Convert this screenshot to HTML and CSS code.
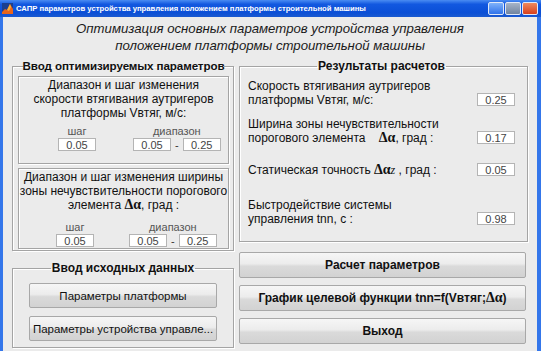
FILE: index.html
```html
<!DOCTYPE html>
<html lang="ru">
<head>
  <meta charset="UTF-8">
  <title>САПР параметров устройства управления</title>
  <link rel="stylesheet" href="styles.css">
</head>
<body>

  <div class="window">
    <div class="titlebar">
      <svg class="app-icon" width="11" height="11" viewBox="0 0 11 11">
        <rect width="11" height="11" fill="#1b3f8f"/>
        <polygon points="0,9 3,6 5,7 8,1 11,6 11,11 0,11" fill="#e8641a"/>
        <polygon points="5,7 8,1 9,4 7,8" fill="#f6b13a"/>
      </svg>
      <span class="title">САПР параметров устройства управления положением платформы строительной машины</span>
      <div class="controls">
        <span class="ctl ctl-min"></span>
        <span class="ctl ctl-max"></span>
        <span class="ctl ctl-close"></span>
      </div>
    </div>

    <div class="client">
      <h1 class="heading">Оптимизация основных параметров устройства управления<br>положением платформы строительной машины</h1>

      <div class="columns">
        <div class="col-left">
          <fieldset class="panel panel-opt">
            <legend>Ввод оптимизируемых параметров</legend>

            <div class="subpanel sub-speed">
              <p class="sub-text">Диапазон и шаг изменения<br>скорости втягивания аутригеров<br>платформы Vвтяг, м/с:</p>
              <div class="ranges">
                <div class="step">
                  <span class="cap">шаг</span>
                  <input class="num" type="text" value="0.05">
                </div>
                <div class="range">
                  <span class="cap">диапазон</span>
                  <div class="pair">
                    <input class="num" type="text" value="0.05">
                    <span class="dash">-</span>
                    <input class="num" type="text" value="0.25">
                  </div>
                </div>
              </div>
            </div>

            <div class="subpanel sub-zone">
              <p class="sub-text">Диапазон и шаг изменения ширины<br>зоны нечувствительности порогового<br>элемента <span class="greek">Δα</span>, град :</p>
              <div class="ranges">
                <div class="step">
                  <span class="cap">шаг</span>
                  <input class="num" type="text" value="0.05">
                </div>
                <div class="range">
                  <span class="cap">диапазон</span>
                  <div class="pair">
                    <input class="num" type="text" value="0.05">
                    <span class="dash">-</span>
                    <input class="num" type="text" value="0.25">
                  </div>
                </div>
              </div>
            </div>
          </fieldset>

          <fieldset class="panel panel-src">
            <legend>Ввод исходных данных</legend>
            <button class="btn">Параметры платформы</button>
            <button class="btn">Параметры устройства управле...</button>
          </fieldset>
        </div>

        <div class="col-right">
          <fieldset class="panel panel-res">
            <legend>Результаты расчетов</legend>

            <div class="res-row row-speed">
              <p class="res-text">Скорость втягивания аутригеров<br>платформы Vвтяг, м/с:</p>
              <input class="num" type="text" value="0.25">
            </div>

            <div class="res-row row-zone">
              <p class="res-text">Ширина зоны нечувствительности<br>порогового элемента <span class="greek greek-gap">Δα</span>, град :</p>
              <input class="num" type="text" value="0.17">
            </div>

            <div class="res-row row-static">
              <p class="res-text">Статическая точность <span class="greek">Δα<i>z</i></span> , град :</p>
              <input class="num" type="text" value="0.05">
            </div>

            <div class="res-row row-speedup">
              <p class="res-text">Быстродействие системы<br>управления tnn, с :</p>
              <input class="num" type="text" value="0.98">
            </div>
          </fieldset>

          <button class="btn btn-wide">Расчет параметров</button>
          <button class="btn btn-wide">График целевой функции tnn=f(Vвтяг;<span class="greek">Δα</span>)</button>
          <button class="btn btn-wide">Выход</button>
        </div>
      </div>
    </div>
  </div>

</body>
</html>
```

FILE: styles.css
```css
* {
  box-sizing: border-box;
}

body {
  margin: 0;
  background: #ebebeb;
  font-family: 'Liberation Sans', Arial, sans-serif;
  color: #111;
}

.window {
  width: 541px;
  height: 351px;
  overflow: hidden;
}

/* XP style caption */
.titlebar {
  height: 17px;
  display: flex;
  align-items: center;
  padding: 0 3px 0 2px;
  background: linear-gradient(#4a8cf2, #1258e0 25%, #0b4fd6 75%, #1a5ad0);
}

.app-icon {
  flex: none;
  margin-right: 3px;
}

.title {
  flex: 1;
  color: #fff;
  font-size: 7.7px;
  font-weight: bold;
  white-space: nowrap;
  overflow: hidden;
}

.controls {
  display: flex;
  gap: 1px;
}

.ctl {
  width: 16px;
  height: 13px;
  border: 1px solid #dfe8f8;
  border-radius: 2px;
  background: linear-gradient(#7fb2fa, #2f72ea);
}

.ctl-max {
  background: linear-gradient(#a6b4c8, #71849f);
}

.ctl-close {
  background: linear-gradient(#f08a5e, #d8401c);
}

.client {
  height: 334px;
  border-left: 3px solid #3476ea;
  border-right: 4px solid #3476ea;
  padding: 0 9px 0 9px;
}

.heading {
  margin: 0;
  padding-top: 3px;
  font-size: 13.2px;
  font-weight: normal;
  font-style: italic;
  line-height: 17px;
  text-align: center;
  color: #1a1a1a;
}

.columns {
  display: flex;
  gap: 5px;
  margin-top: 5px;
}

.col-left {
  width: 222px;
}

.col-right {
  width: 289px;
}

/* etched panels */
.panel {
  margin: 0;
  min-width: 0;
  border: 1px solid #a4a4a4;
  box-shadow: inset 1px 1px 0 #fff, 1px 1px 0 #fff;
  padding: 0;
}

.panel legend {
  margin: 0 auto;
  padding: 0 1px;
  font-size: 12px;
  font-weight: bold;
  line-height: 14px;
  white-space: nowrap;
  color: #111;
}

.panel-opt {
  padding: 0 4px 1px 5px;
}

.panel-opt legend {
  font-size: 11.6px;
  letter-spacing: -0.1px;
  padding: 0;
}

.panel-src {
  margin-top: 10px;
  padding: 0 0 6px 0;
}

.subpanel {
  border: 1px solid #a4a4a4;
  box-shadow: inset 1px 1px 0 #fff, 1px 1px 0 #fff;
  text-align: center;
  padding-top: 1px;
}

.sub-speed {
  margin-top: 3px;
  padding-bottom: 12px;
}

.sub-zone {
  margin-top: 4px;
  padding-bottom: 1px;
}

.sub-text {
  margin: 0;
  font-size: 12px;
  line-height: 14px;
  white-space: nowrap;
}

.ranges {
  display: flex;
  align-items: flex-end;
  gap: 37px;
  padding-left: 39px;
  margin-top: 5px;
}

.sub-zone .ranges {
  margin-top: 9px;
  padding-left: 37px;
  gap: 35px;
}

.step,
.range {
  display: flex;
  flex-direction: column;
  align-items: center;
}

.cap {
  font-size: 11px;
  line-height: 12px;
  color: #555;
  margin-bottom: 1px;
}

.pair {
  display: flex;
  align-items: center;
  gap: 4px;
}

.dash {
  font-size: 11px;
  color: #333;
}

.num {
  width: 38px;
  height: 13px;
  padding: 0;
  border: 1px solid #b4b4b4;
  background: #fff;
  font-family: 'Liberation Sans', Arial, sans-serif;
  font-size: 11px;
  color: #444;
  text-align: center;
}

.greek {
  font-family: 'Liberation Serif', 'Times New Roman', serif;
  font-size: 14px;
  font-weight: bold;
  line-height: 12px;
}

.greek i {
  font-size: 12px;
  font-weight: normal;
}

.greek-gap {
  margin-left: 10px;
}

/* results */
.panel-res {
  padding: 0 12px 15px 8px;
}

.res-row {
  display: flex;
  align-items: flex-end;
  justify-content: space-between;
}

.res-row .num {
  margin-bottom: 1px;
}

.res-text {
  margin: 0;
  font-size: 12px;
  line-height: 14px;
}

.row-speed {
  margin-top: 6px;
}

.row-zone {
  margin-top: 10px;
}

.row-static {
  margin-top: 18px;
}

.row-speedup {
  margin-top: 21px;
}

/* push buttons */
.btn {
  display: block;
  width: 188px;
  height: 25px;
  margin: 8px auto 0;
  padding: 0;
  border: 1px solid #a8a8a8;
  border-radius: 2px;
  background: linear-gradient(#f6f6f6, #ececec 45%, #dadada 55%, #d2d2d2);
  font-family: 'Liberation Sans', Arial, sans-serif;
  font-size: 11.5px;
  white-space: nowrap;
  color: #111;
}

.btn-wide {
  width: 287px;
  height: 26px;
  margin: 10px 0 0;
  font-size: 12px;
  font-weight: bold;
}

.btn-wide + .btn-wide {
  margin-top: 7px;
}
```
